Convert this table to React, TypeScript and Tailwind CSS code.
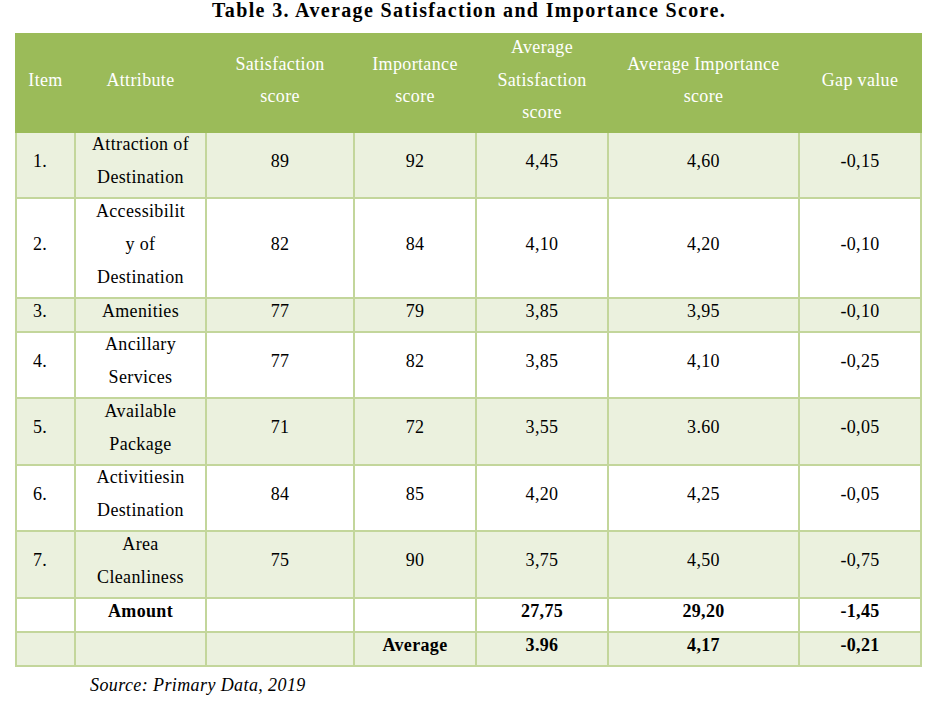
import React from "react";

type Row = {
  item: string;
  attr: React.ReactNode;
  sat: string;
  imp: string;
  avgSat: string;
  avgImp: string;
  gap: string;
  h: string;
  light: boolean;
};

const rows: Row[] = [
  { item: "1.", attr: <>Attraction of<br />Destination</>, sat: "89", imp: "92", avgSat: "4,45", avgImp: "4,60", gap: "-0,15", h: "h-[66px]", light: true },
  { item: "2.", attr: <>Accessibilit<br />y of<br />Destination</>, sat: "82", imp: "84", avgSat: "4,10", avgImp: "4,20", gap: "-0,10", h: "h-[100px]", light: false },
  { item: "3.", attr: <>Amenities</>, sat: "77", imp: "79", avgSat: "3,85", avgImp: "3,95", gap: "-0,10", h: "h-[34px]", light: true },
  { item: "4.", attr: <>Ancillary<br />Services</>, sat: "77", imp: "82", avgSat: "3,85", avgImp: "4,10", gap: "-0,25", h: "h-[66px]", light: false },
  { item: "5.", attr: <>Available<br />Package</>, sat: "71", imp: "72", avgSat: "3,55", avgImp: "3.60", gap: "-0,05", h: "h-[67px]", light: true },
  { item: "6.", attr: <>Activitiesin<br />Destination</>, sat: "84", imp: "85", avgSat: "4,20", avgImp: "4,25", gap: "-0,05", h: "h-[66px]", light: false },
  { item: "7.", attr: <>Area<br />Cleanliness</>, sat: "75", imp: "90", avgSat: "3,75", avgImp: "4,50", gap: "-0,75", h: "h-[67px]", light: true },
];

function Td({ children, left = false, bold = false }: { children?: React.ReactNode; left?: boolean; bold?: boolean }) {
  return (
    <td
      className={`border-2 border-[#c3d69b] p-0 align-middle ${left ? "text-left pl-[16px]" : "text-center"} ${bold ? "font-bold" : ""}`}
    >
      <div className="leading-[33px] -my-px -translate-y-1">{children}</div>
    </td>
  );
}

function Th({ children }: { children: React.ReactNode }) {
  return (
    <th className="border-2 border-[#9bbb59] p-0 align-middle text-center font-normal">
      <div className="leading-[32.5px] -my-px -translate-y-[3.5px]">{children}</div>
    </th>
  );
}

export default function App() {
  return (
    <div className="w-[938px] h-[701px] bg-white [font-family:'Liberation_Serif','Times_New_Roman',serif] text-black">
      <div className="text-center text-[20px] leading-[20px] font-bold tracking-[1.35px]">
        Table 3. Average Satisfaction and Importance Score.
      </div>
      <div className="pl-[15px] mt-[13px]">
        <table className="w-[905px] table-fixed border-collapse text-[18px] tracking-[0.35px]">
          <colgroup>
            <col className="w-[59px]" />
            <col className="w-[131px]" />
            <col className="w-[148px]" />
            <col className="w-[122px]" />
            <col className="w-[132px]" />
            <col className="w-[191px]" />
            <col className="w-[122px]" />
          </colgroup>
          <thead>
            <tr className="h-[98px] bg-[#9bbb59] text-white">
              <Th>Item</Th>
              <Th>Attribute</Th>
              <Th>Satisfaction<br />score</Th>
              <Th>Importance<br />score</Th>
              <Th>Average<br />Satisfaction<br />score</Th>
              <Th>Average Importance<br />score</Th>
              <Th>Gap value</Th>
            </tr>
          </thead>
          <tbody>
            {rows.map((r) => (
              <tr key={r.item} className={`${r.h} ${r.light ? "bg-[#ebf1de]" : "bg-white"}`}>
                <Td left>{r.item}</Td>
                <Td>{r.attr}</Td>
                <Td>{r.sat}</Td>
                <Td>{r.imp}</Td>
                <Td>{r.avgSat}</Td>
                <Td>{r.avgImp}</Td>
                <Td>{r.gap}</Td>
              </tr>
            ))}
            <tr className="h-[34px] bg-white">
              <Td />
              <Td bold>Amount</Td>
              <Td />
              <Td />
              <Td bold>27,75</Td>
              <Td bold>29,20</Td>
              <Td bold>-1,45</Td>
            </tr>
            <tr className="h-[34px] bg-[#ebf1de]">
              <Td />
              <Td />
              <Td />
              <Td bold>Average</Td>
              <Td bold>3.96</Td>
              <Td bold>4,17</Td>
              <Td bold>-0,21</Td>
            </tr>
          </tbody>
        </table>
      </div>
      <div className="pl-[90px] mt-[6px] text-[18px] leading-[24px] italic tracking-[0.4px]">
        Source: Primary Data, 2019
      </div>
    </div>
  );
}
